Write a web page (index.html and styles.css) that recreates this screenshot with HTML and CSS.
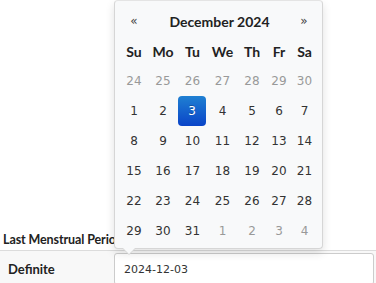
FILE: index.html
```html
<!DOCTYPE html>
<html>
<head>
    <meta charset="UTF-8" />
    <link rel="stylesheet" href="styles.css">
</head>
<body>

    <main class="page">

        <section class="field-group">
            <h4 class="group-title">Last Menstrual Period</h4>
            <div class="field-row">
                <label class="field-label" for="lmp">Definite</label>
                <input class="field-input" id="lmp" type="text" value="2024-12-03" />
            </div>
        </section>

        <div class="datepicker">
            <div class="dp-head">
                <span class="dp-nav">&laquo;</span>
                <span class="dp-title">December 2024</span>
                <span class="dp-nav">&raquo;</span>
            </div>
            <div class="dp-grid">
                <span class="dp-dow">Su</span><span class="dp-dow">Mo</span><span class="dp-dow">Tu</span><span class="dp-dow">We</span><span class="dp-dow">Th</span><span class="dp-dow">Fr</span><span class="dp-dow">Sa</span>

                <span class="dp-day old">24</span><span class="dp-day old">25</span><span class="dp-day old">26</span><span class="dp-day old">27</span><span class="dp-day old">28</span><span class="dp-day old">29</span><span class="dp-day old">30</span>

                <span class="dp-day">1</span><span class="dp-day">2</span><span class="dp-day active">3</span><span class="dp-day">4</span><span class="dp-day">5</span><span class="dp-day">6</span><span class="dp-day">7</span>

                <span class="dp-day">8</span><span class="dp-day">9</span><span class="dp-day">10</span><span class="dp-day">11</span><span class="dp-day">12</span><span class="dp-day">13</span><span class="dp-day">14</span>

                <span class="dp-day">15</span><span class="dp-day">16</span><span class="dp-day">17</span><span class="dp-day">18</span><span class="dp-day">19</span><span class="dp-day">20</span><span class="dp-day">21</span>

                <span class="dp-day">22</span><span class="dp-day">23</span><span class="dp-day">24</span><span class="dp-day">25</span><span class="dp-day">26</span><span class="dp-day">27</span><span class="dp-day">28</span>

                <span class="dp-day">29</span><span class="dp-day">30</span><span class="dp-day">31</span><span class="dp-day new">1</span><span class="dp-day new">2</span><span class="dp-day new">3</span><span class="dp-day new">4</span>
            </div>
        </div>

    </main>

</body>
</html>
```

FILE: styles.css
```css
* {
    margin: 0;
    padding: 0;
    box-sizing: border-box;
}

body {
    background: #fff;
    font-family: "DejaVu Sans", sans-serif;
    color: #333;
    overflow: hidden;
}

.page {
    position: relative;
    height: 283px;
    padding-top: 231px;
}

/* form underneath */

.group-title {
    font-family: "Lato", sans-serif;
    font-weight: 700;
    font-size: 12.5px;
    letter-spacing: -0.1px;
    line-height: 18px;
    color: #222;
    padding: 0 0 1px 3px;
    border-bottom: 1px solid #dcdcdc;
}

.field-row {
    display: flex;
    align-items: center;
    background: #f8f8f8;
    padding: 2px 2px 0 8px;
}

.field-label {
    width: 106px;
    font-family: "Lato", sans-serif;
    font-weight: 700;
    font-size: 13px;
    color: #222;
}

.field-input {
    flex: 1;
    height: 32px;
    border: 1px solid #ccc;
    border-radius: 3px;
    background: #fff;
    padding: 0 9px;
    font-family: "DejaVu Sans", sans-serif;
    font-size: 11px;
    color: #333;
}

/* datepicker popup */

.datepicker {
    position: absolute;
    left: 114px;
    top: 0;
    width: 209px;
    height: 249px;
    background: #f8f9fa;
    border: 1px solid #d6d6d6;
    border-top-color: #e4e4e4;
    border-radius: 4px;
    box-shadow: 0 4px 10px rgba(0, 0, 0, .12);
    padding: 5px 5px 0 5px;
}

.datepicker::before,
.datepicker::after {
    content: "";
    position: absolute;
    left: 7px;
    width: 0;
    height: 0;
    border-left: 7px solid transparent;
    border-right: 7px solid transparent;
}

.datepicker::before {
    bottom: -7px;
    border-top: 7px solid #d6d6d6;
}

.datepicker::after {
    left: 8px;
    bottom: -6px;
    border-left-width: 6px;
    border-right-width: 6px;
    border-top: 6px solid #f8f9fa;
}

.dp-head {
    display: grid;
    grid-template-columns: 28px 1fr 26px;
    width: 197px;
    height: 30px;
    align-items: center;
    text-align: center;
}

.dp-nav {
    font-size: 12px;
    color: #444;
}

.dp-title {
    font-family: "Lato", sans-serif;
    font-weight: 700;
    font-size: 14px;
    color: #222;
}

.dp-grid {
    display: grid;
    grid-template-columns: 28px 30px 29px 31px 28px 26px 25px;
    grid-auto-rows: 30px;
}

.dp-dow,
.dp-day {
    display: flex;
    align-items: center;
    justify-content: center;
}

.dp-dow {
    font-family: "Lato", sans-serif;
    font-weight: 700;
    font-size: 14px;
    color: #222;
}

.dp-day {
    font-size: 12px;
    color: #333;
}

.dp-day.old,
.dp-day.new {
    color: #999;
}

.dp-day.active {
    width: 28px;
    border-radius: 4px;
    background: linear-gradient(to bottom, #1f80d2, #0a44c8);
    color: #fff;
    text-shadow: 0 -1px 0 rgba(0, 0, 0, .25);
}
```
